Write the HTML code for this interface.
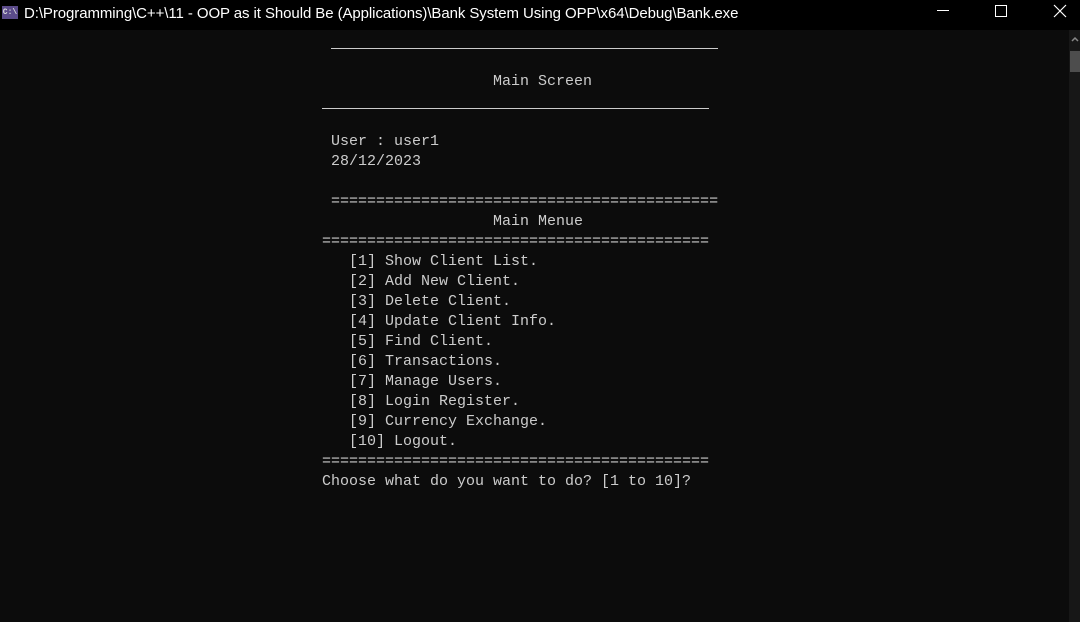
<!DOCTYPE html>
<html><head><meta charset="utf-8"><style>
*{margin:0;padding:0}
html,body{width:1080px;height:622px;overflow:hidden;background:#0c0c0c}
#tb{position:absolute;left:0;top:0;width:1080px;height:30px;background:#000}
#tt{position:absolute;left:24px;top:5px;color:#fff;font:15px "Liberation Sans",sans-serif;white-space:nowrap;letter-spacing:-0.08px}
#ic{position:absolute;left:2px;top:6px;width:16px;height:13px;background:#5b4b8a;color:#ddd;font:bold 8px "Liberation Mono",monospace;line-height:13px;text-align:center}
pre{position:absolute;left:322px;top:32px;color:#cccccc;font:15px/20px "Liberation Mono",monospace}
.hl{position:absolute;height:1px;background:#cccccc}
#sb{position:absolute;left:1069px;top:30px;width:11px;height:592px;background:#171717}
#th{position:absolute;left:1070px;top:51px;width:10px;height:21px;background:#4d4d4d}
</style></head><body>
<div id="tb"><div id="ic">C:\</div><div id="tt">D:\Programming\C++\11 - OOP as it Should Be (Applications)\Bank System Using OPP\x64\Debug\Bank.exe</div>
<div style="position:absolute;left:937px;top:10px;width:12px;height:1px;background:#fff"></div>
<div style="position:absolute;left:995px;top:5px;width:10px;height:10px;border:1px solid #fff"></div>
<svg style="position:absolute;left:1053px;top:4px" width="14" height="14"><path d="M1 1L13 13M13 1L1 13" stroke="#fff" stroke-width="1.2"/></svg>
</div>
<div class="hl" style="left:331px;top:48px;width:387px"></div>
<div class="hl" style="left:322px;top:108px;width:387px"></div>
<pre>


                   Main Screen


 User : user1
 28/12/2023

 ===========================================
                   Main Menue
===========================================
   [1] Show Client List.
   [2] Add New Client.
   [3] Delete Client.
   [4] Update Client Info.
   [5] Find Client.
   [6] Transactions.
   [7] Manage Users.
   [8] Login Register.
   [9] Currency Exchange.
   [10] Logout.
===========================================
Choose what do you want to do? [1 to 10]?</pre>
<div id="sb"></div><div id="th"></div>
<svg style="position:absolute;left:1071px;top:35px" width="8" height="8"><path d="M1 6L4 3L7 6" stroke="#888" fill="none" stroke-width="1.5"/></svg>
</body></html>
